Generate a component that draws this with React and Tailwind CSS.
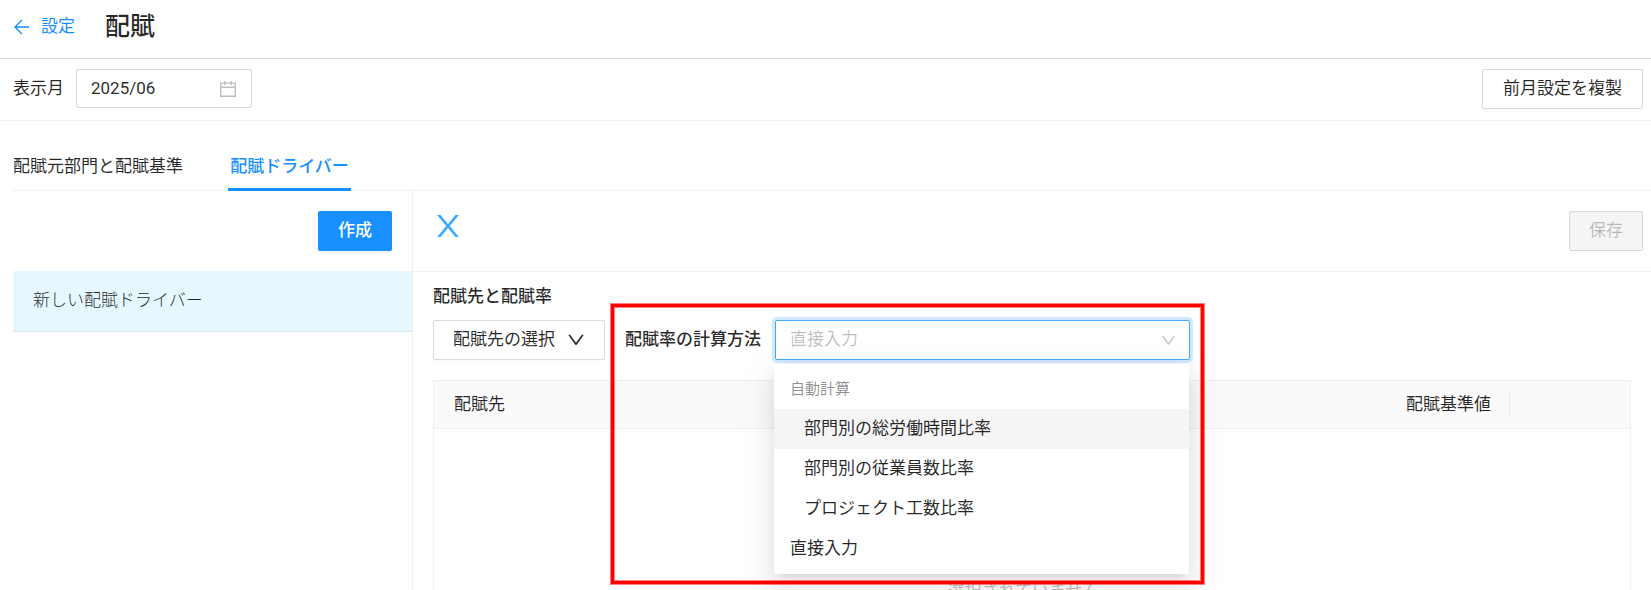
import { useState } from "react";

const groupedOptions = [
  "部門別の総労働時間比率",
  "部門別の従業員数比率",
  "プロジェクト工数比率",
];

function ArrowLeftIcon() {
  return (
    <svg viewBox="0 0 16 16" className="size-4" fill="none" stroke="currentColor" strokeWidth="1.4" aria-hidden="true">
      <path d="M16 8H1.500M9 1L2 8l7 7" />
    </svg>
  );
}

function CalendarIcon() {
  return (
    <svg viewBox="64 64 896 896" className="size-[18px]" fill="currentColor" aria-hidden="true">
      <path d="M880 184H712v-64c0-4.400-3.600-8-8-8h-56c-4.400 0-8 3.600-8 8v64H384v-64c0-4.400-3.600-8-8-8h-56c-4.400 0-8 3.600-8 8v64H144c-17.700 0-32 14.300-32 32v664c0 17.700 14.300 32 32 32h736c17.700 0 32-14.300 32-32V216c0-17.700-14.300-32-32-32zm-40 656H184V460h656v380zM184 392V256h128v48c0 4.400 3.600 8 8 8h56c4.400 0 8-3.600 8-8v-48h256v48c0 4.400 3.600 8 8 8h56c4.400 0 8-3.600 8-8v-48h128v136H184z" />
    </svg>
  );
}

function DownIcon({ className }) {
  return (
    <svg viewBox="64 64 896 896" className={className} fill="currentColor" aria-hidden="true">
      <path d="M884 256h-75c-5.100 0-9.900 2.500-12.900 6.600L512 654.200 227.900 262.600c-3-4.100-7.800-6.600-12.900-6.600h-75c-6.500 0-10.300 7.400-6.500 12.700l352.600 486.100c12.800 17.600 39 17.600 51.700 0l352.600-486.100c3.900-5.300.1-12.700-6.400-12.700z" />
    </svg>
  );
}

function CloseIcon() {
  return (
    <svg viewBox="64 64 896 896" className="size-[30px]" fill="currentColor" aria-hidden="true">
      <path d="M563.800 512l262.500-312.900c4.400-5.200.7-13.100-6.100-13.100h-79.800c-4.700 0-9.200 2.100-12.300 5.700L511.600 449.800 295.100 191.700c-3-3.600-7.500-5.700-12.300-5.700H203c-6.800 0-10.500 7.900-6.100 13.100L459.400 512 196.900 824.900A7.950 7.950 0 00203 838h79.800c4.700 0 9.200-2.100 12.300-5.700l216.500-258.100 216.500 258.100c3 3.600 7.500 5.700 12.300 5.700h79.800c6.800 0 10.500-7.900 6.100-13.100L563.800 512z" />
    </svg>
  );
}

function Header() {
  return (
    <header className="flex h-[59px] shrink-0 items-center gap-[30px] border-b border-[#d9d9d9] px-[13px] pb-1">
      <a href="#settings" className="flex items-center gap-3 text-[#1890ff]">
        <ArrowLeftIcon />
        設定
      </a>
      <h1 className="text-[25px] leading-8 font-medium">配賦</h1>
    </header>
  );
}

function MonthBar() {
  const [month, setMonth] = useState("2025/06");
  return (
    <div className="flex h-[62px] shrink-0 items-start justify-between border-b border-[#f0f0f0] pt-[10px] pr-2 pl-[13px]">
      <div className="flex items-center gap-3">
        <label htmlFor="month">表示月</label>
        <div className="flex h-[39px] w-44 items-center rounded-[2px] border border-[#d9d9d9] px-[14px]">
          <input
            id="month"
            className="min-w-0 flex-1 outline-none"
            value={month}
            onChange={(e) => setMonth(e.target.value)}
          />
          <span className="text-black/25">
            <CalendarIcon />
          </span>
        </div>
      </div>
      <button type="button" className="h-10 rounded-[2px] border border-[#d9d9d9] px-5 shadow-[0_2px_0_rgba(0,0,0,0.016)]">
        前月設定を複製
      </button>
    </div>
  );
}

function Tabs() {
  return (
    <div role="tablist" className="ml-[13px] flex shrink-0 gap-10 border-b border-[#f0f0f0] pt-5">
      <button type="button" role="tab" aria-selected="false" className="h-[49px] w-[175px] pt-[2px] text-left">
        配賦元部門と配賦基準
      </button>
      <button
        type="button"
        role="tab"
        aria-selected="true"
        className="-mb-px h-[50px] w-[123px] border-b-3 border-[#1890ff] pt-1 font-medium text-[#1890ff]"
      >
        配賦ドライバー
      </button>
    </div>
  );
}

function DriverList() {
  return (
    <aside className="w-[400px] shrink-0 border-r border-[#f0f0f0]">
      <div className="flex h-20 items-center justify-end pr-5">
        <button type="button" className="h-10 rounded-[2px] bg-[#1890ff] px-5 font-medium text-white shadow-[0_2px_0_rgba(0,0,0,0.045)]">
          作成
        </button>
      </div>
      <ul>
        <li className="flex h-[61px] items-center border-b border-[#d5e6ee] bg-[#e6f7ff] px-5 font-light">
          新しい配賦ドライバー
        </li>
      </ul>
    </aside>
  );
}

function MethodSelect() {
  const [method, setMethod] = useState("直接入力");
  return (
    <div className="relative w-[415px]">
      <select
        id="method"
        value={method}
        onChange={(e) => setMethod(e.target.value)}
        className="h-10 w-full appearance-none rounded-[2px] border border-[#40a9ff] px-[14px] text-black/25 shadow-[0_0_0_3px_rgba(24,144,255,0.2)] outline-none"
      >
        <optgroup label="自動計算">
          {groupedOptions.map((name) => (
            <option key={name}>{name}</option>
          ))}
        </optgroup>
        <option>直接入力</option>
      </select>
      <span className="pointer-events-none absolute inset-y-0 right-[14px] flex items-center text-black/25">
        <DownIcon className="size-[15px]" />
      </span>
      <ul
        role="listbox"
        aria-label="配賦率の計算方法"
        className="absolute top-[44px] -left-px z-10 w-full rounded-[2px] bg-white py-[5px] shadow-[0_4px_8px_-5px_rgba(0,0,0,0.12),0_8px_20px_0_rgba(0,0,0,0.08),0_12px_35px_10px_rgba(0,0,0,0.05)]"
      >
        <li role="presentation" className="flex h-10 items-center px-4 text-[15px] text-black/45">
          自動計算
        </li>
        {groupedOptions.map((name, index) => (
          <li
            key={name}
            role="option"
            aria-selected={index === 0}
            className="flex h-10 items-center pr-4 pl-[30px] aria-selected:bg-[#f5f5f5]"
          >
            {name}
          </li>
        ))}
        <li role="option" aria-selected="false" className="flex h-10 items-center px-4">
          直接入力
        </li>
      </ul>
      <div
        aria-hidden="true"
        className="pointer-events-none absolute -top-4 -right-[14px] -left-[164px] z-20 h-[280px] border-3 border-[#ff0000] shadow-[0_0_0_1px_rgba(255,0,0,0.5),inset_0_0_0_1px_rgba(255,0,0,0.5)]"
      />
    </div>
  );
}

function AllocationTable() {
  return (
    <div className="mt-5 border border-[#f0f0f0]">
      <table className="w-full table-fixed">
        <thead className="bg-[#fafafa]">
          <tr className="h-[47px] border-b border-[#f0f0f0]">
            <th scope="col" className="px-5 text-left font-normal">配賦先</th>
            <th scope="col" className="py-2 text-right font-normal">
              <div className="flex h-7 items-center justify-end border-r border-[#e8e8e8] pr-[18px]">配賦基準値</div>
            </th>
            <td className="w-[120px]" />
          </tr>
        </thead>
        <tbody>
          <tr className="h-[326px]">
            <td colSpan={3} className="text-center text-black/25">選択されていません。</td>
          </tr>
        </tbody>
      </table>
    </div>
  );
}

function DriverDetail() {
  return (
    <main className="min-w-0 flex-1">
      <div className="flex h-[81px] items-center justify-between border-b border-[#f0f0f0] pr-2 pl-5">
        <button type="button" aria-label="閉じる" className="pb-[10px] text-[#40a9ff]">
          <CloseIcon />
        </button>
        <button type="button" disabled className="h-10 rounded-[2px] border border-[#d9d9d9] bg-[#f5f5f5] px-[19px] text-black/25">
          保存
        </button>
      </div>
      <section className="px-5 pt-3">
        <h2 className="leading-6 font-medium">配賦先と配賦率</h2>
        <div className="mt-3 flex items-center">
          <button type="button" className="mr-5 flex h-10 w-[172px] items-center justify-between rounded-[2px] border border-[#d9d9d9] px-[19px] shadow-[0_2px_0_rgba(0,0,0,0.016)]">
            配賦先の選択
            <DownIcon className="size-[18px]" />
          </button>
          <label htmlFor="method" className="w-[150px] font-medium">配賦率の計算方法</label>
          <MethodSelect />
        </div>
        <AllocationTable />
      </section>
    </main>
  );
}

export default function App() {
  return (
    <div className="flex h-screen flex-col overflow-hidden bg-white font-[Roboto,'Noto_Sans_CJK_JP',sans-serif] text-[17px] text-black/85">
      <Header />
      <MonthBar />
      <Tabs />
      <div className="flex min-h-0 flex-1 pl-[13px]">
        <DriverList />
        <DriverDetail />
      </div>
    </div>
  );
}
